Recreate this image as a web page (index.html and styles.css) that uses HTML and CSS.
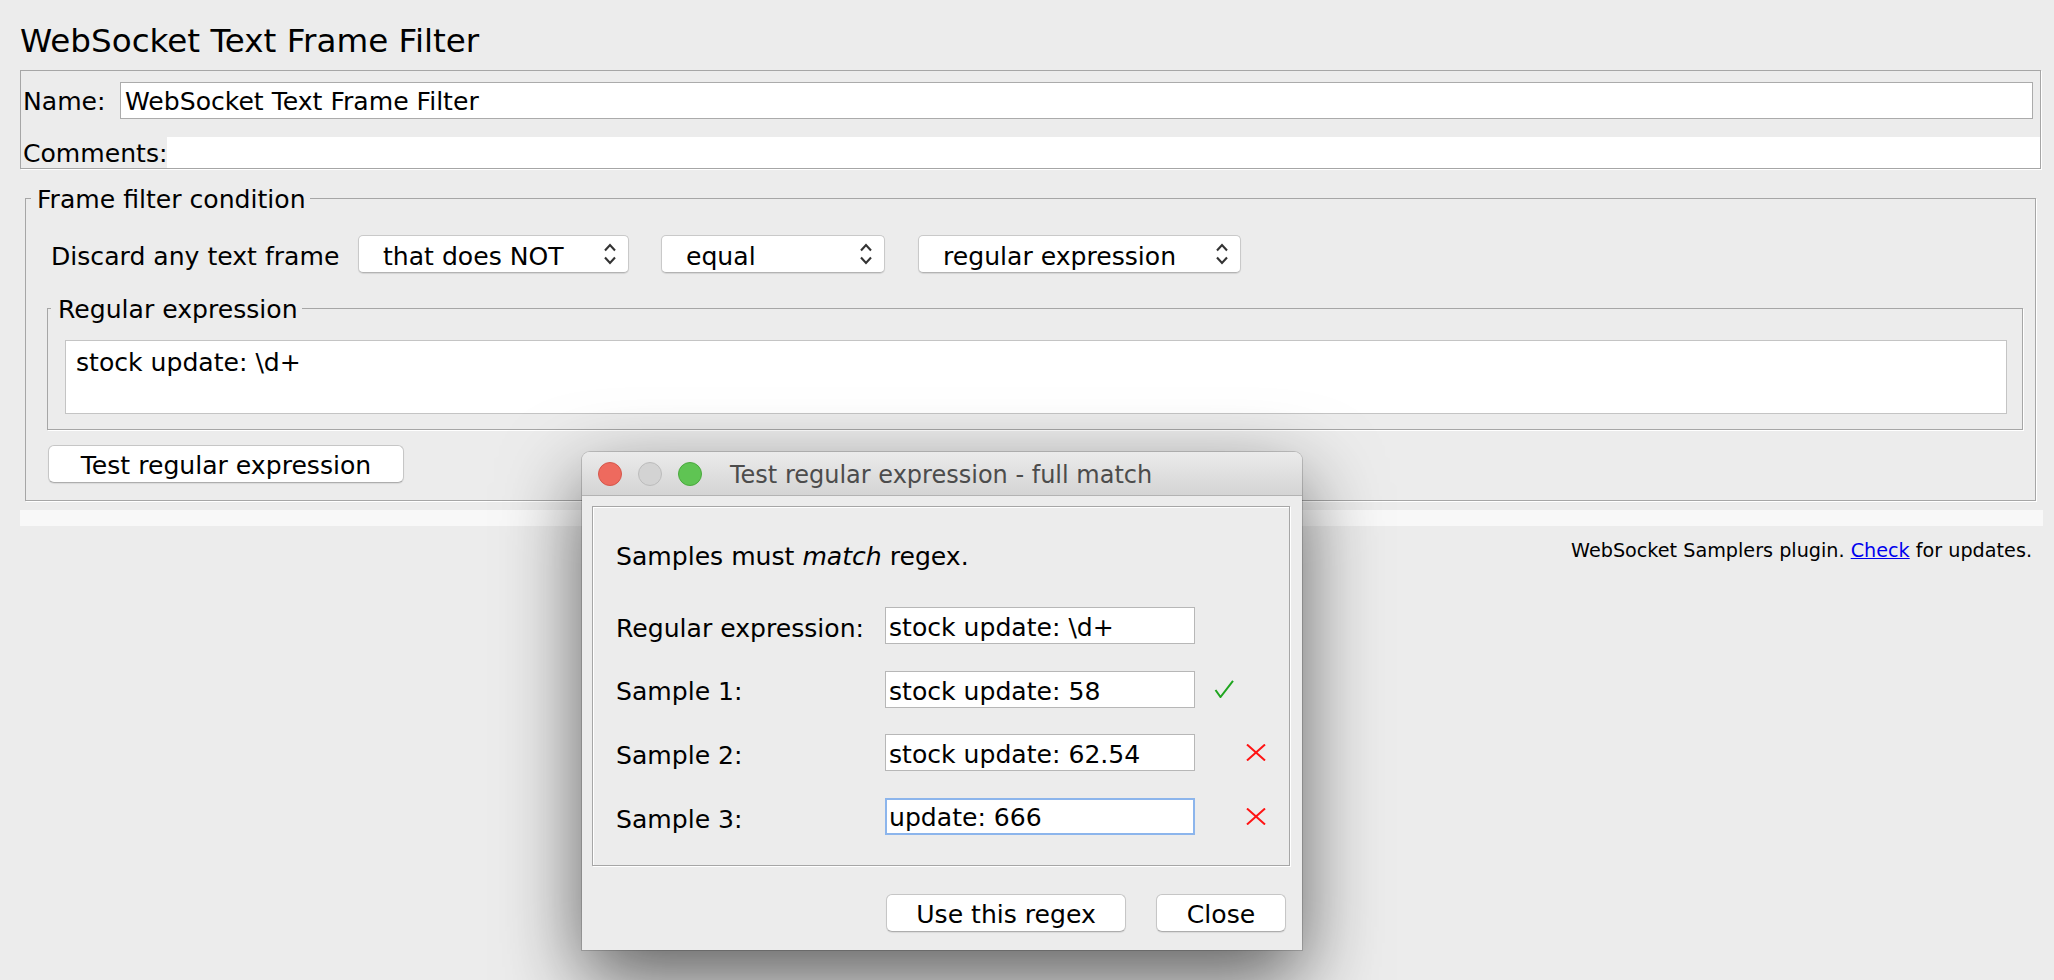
FILE: index.html
```html
<!DOCTYPE html>
<html>
<head>
<meta charset="utf-8">
<title>WebSocket Text Frame Filter</title>
<link rel="stylesheet" href="styles.css">
</head>
<body>
<div class="page">
  <h1 class="title">WebSocket Text Frame Filter</h1>

  <div class="name-panel">
    <div class="row name-row">
      <span class="lbl name-lbl">Name:</span>
      <div class="field name-field">WebSocket Text Frame Filter</div>
    </div>
    <div class="row comments-row">
      <span class="lbl comments-lbl">Comments:</span>
      <div class="comments-field"></div>
    </div>
  </div>

  <fieldset class="group outer">
    <legend class="outer-legend">Frame filter condition</legend>
    <div class="outer-body">
      <div class="cond-row">
        <span class="cond-lbl">Discard any text frame</span>
        <div class="combo c1"><span class="combo-text">that does NOT</span><svg class="arrows" width="12" height="24" viewBox="0 0 12 24"><path d="M1 8.5 L6 3 L11 8.5 M1 15.5 L6 21 L11 15.5" fill="none" stroke="#333" stroke-width="2.1"/></svg></div>
        <div class="combo c2"><span class="combo-text">equal</span><svg class="arrows" width="12" height="24" viewBox="0 0 12 24"><path d="M1 8.5 L6 3 L11 8.5 M1 15.5 L6 21 L11 15.5" fill="none" stroke="#333" stroke-width="2.1"/></svg></div>
        <div class="combo c3"><span class="combo-text">regular expression</span><svg class="arrows" width="12" height="24" viewBox="0 0 12 24"><path d="M1 8.5 L6 3 L11 8.5 M1 15.5 L6 21 L11 15.5" fill="none" stroke="#333" stroke-width="2.1"/></svg></div>
      </div>

      <fieldset class="group regex">
        <legend class="regex-legend">Regular expression</legend>
        <div class="regex-body">
          <div class="textarea">stock update: \d+</div>
        </div>
      </fieldset>

      <button class="btn test-btn">Test regular expression</button>
    </div>
  </fieldset>

  <div class="strip"></div>
  <div class="footer">WebSocket Samplers plugin. <a href="#" class="link">Check</a> for updates.</div>
</div>

<div class="dialog">
  <div class="titlebar">
    <span class="light red"></span>
    <span class="light gray"></span>
    <span class="light green"></span>
    <span class="dtitle">Test regular expression - full match</span>
  </div>
  <div class="inner">
    <div class="samples">Samples must <em>match</em> regex.</div>
    <div class="grid">
      <span class="dlbl">Regular expression:</span>
      <div class="dfield">stock update: \d+</div>
      <span class="mark"></span>

      <span class="dlbl">Sample 1:</span>
      <div class="dfield">stock update: 58</div>
      <span class="mark"><svg class="check" width="20" height="18" viewBox="0 0 20 18"><path d="M1.5 10 L6.5 17 L19 0.8" fill="none" stroke="#1fa51f" stroke-width="2"/></svg></span>

      <span class="dlbl">Sample 2:</span>
      <div class="dfield">stock update: 62.54</div>
      <span class="mark"><svg class="cross" width="20" height="17" viewBox="0 0 20 17"><path d="M1 0.5 L19 16.5 M19 0.5 L1 16.5" fill="none" stroke="#ff1414" stroke-width="2"/></svg></span>

      <span class="dlbl">Sample 3:</span>
      <div class="dfield focus">update: 666</div>
      <span class="mark"><svg class="cross" width="20" height="17" viewBox="0 0 20 17"><path d="M1 0.5 L19 16.5 M19 0.5 L1 16.5" fill="none" stroke="#ff1414" stroke-width="2"/></svg></span>
    </div>
  </div>
  <div class="dbuttons">
    <button class="btn use-btn">Use this regex</button>
    <button class="btn close-btn">Close</button>
  </div>
</div>
</body>
</html>
```

FILE: styles.css
```css
* { box-sizing: border-box; }

html, body {
  margin: 0;
  height: 980px;
  overflow: hidden;
}

body {
  position: relative;
  width: 2054px;
  background: #ececec;
  font-family: "DejaVu Sans", "Liberation Sans", sans-serif;
  font-size: 25.1px;
  color: #000;
}

.page {
  padding: 0 13px 0 20px;
}

.title {
  margin: 0;
  height: 70px;
  padding-top: 23px;
  font-size: 32.6px;
  line-height: 36px;
  font-weight: normal;
  white-space: nowrap;
}

/* Name / Comments panel */
.name-panel {
  height: 99px;
  border: 1px solid #a6a6a6;
  box-shadow: 1px 1px 0 #fff;
  padding-top: 11px;
}

.row {
  display: flex;
  align-items: center;
}

.name-row { height: 37px; }

.lbl {
  padding: 2px 0 0 2px;
  white-space: nowrap;
}

.name-lbl { width: 99px; flex: none; }

.field {
  background: #fff;
  border: 1px solid #ababab;
  white-space: nowrap;
}

.name-field {
  flex: 1;
  height: 37px;
  margin-right: 7px;
  padding: 1px 4px 0;
  line-height: 35px;
}

.comments-row {
  margin-top: 18px;
  height: 31px;
}

.comments-lbl { width: 146px; flex: none; }

.comments-field {
  flex: 1;
  height: 31px;
  background: #fff;
}

/* Titled (etched) groups */
.group {
  margin: 0;
  padding: 0;
  min-width: 0;
  border: 1px solid #a6a6a6;
  box-shadow: 1px 1px 0 #fff;
}

.group legend {
  line-height: 28px;
  padding-top: 4px;
  white-space: nowrap;
}

.outer {
  margin: 13px 5px 0 5px;
}

.outer-legend {
  margin-left: 5px;
  padding-left: 6px;
  padding-right: 4px;
}

.outer-body {
  padding: 21px 12px 17px 21px;
}

.cond-row {
  display: flex;
  align-items: center;
  height: 38px;
  margin-left: 4px;
}

.cond-lbl {
  width: 307px;
  flex: none;
  padding-top: 5px;
  white-space: nowrap;
}

.combo {
  flex: none;
  height: 38px;
  display: flex;
  align-items: center;
  justify-content: space-between;
  padding: 0 12px 0 24px;
  background: #fff;
  border: 1px solid #c9c9c9;
  border-bottom-color: #b3b3b3;
  border-radius: 5px;
  box-shadow: 0 1px 1px rgba(0, 0, 0, 0.1);
  white-space: nowrap;
}

.combo-text { padding-top: 5px; }

.c1 { width: 271px; }
.c2 { width: 224px; margin-left: 32px; }
.c3 { width: 323px; margin-left: 33px; }

.arrows { display: block; flex: none; }

.regex {
  margin-top: 19px;
}

.regex-legend {
  margin-left: 3px;
  padding-left: 7px;
  padding-right: 4px;
}

.regex-body {
  padding: 16px 15px 15px 17px;
}

.textarea {
  height: 74px;
  background: #fff;
  border: 1px solid #c4c4c4;
  padding: 7px 10px 0;
  line-height: 30px;
}

.btn {
  display: block;
  height: 38px;
  padding: 2px 0 0;
  font-family: inherit;
  font-size: inherit;
  color: #000;
  background: #fff;
  border: 1px solid #c6c6c6;
  border-bottom-color: #adadad;
  border-radius: 6px;
  box-shadow: 0 1px 1px rgba(0, 0, 0, 0.08);
  white-space: nowrap;
}

.test-btn {
  margin: 15px 0 0 1px;
  width: 356px;
}

.strip {
  margin: 9px -2px 0 0;
  height: 16px;
  background: #f8f8f8;
}

.footer {
  margin-top: 14px;
  padding-right: 9px;
  text-align: right;
  font-size: 19.2px;
  line-height: 22px;
  white-space: nowrap;
}

.link {
  color: #0000ee;
  text-decoration: underline;
}

/* Dialog window */
.dialog {
  position: absolute;
  left: 582px;
  top: 452px;
  width: 720px;
  height: 498px;
  background: #ececec;
  border-radius: 8px 8px 0 0;
  box-shadow: 0 30px 80px rgba(0, 0, 0, 0.6), 0 0 0 1px rgba(0, 0, 0, 0.16);
}

.titlebar {
  height: 44px;
  display: flex;
  align-items: center;
  padding-left: 16px;
  background: linear-gradient(#ebebeb, #d4d4d4);
  border-bottom: 1px solid #b3b3b3;
  border-radius: 8px 8px 0 0;
}

.light {
  width: 24px;
  height: 24px;
  border-radius: 50%;
  margin-right: 16px;
  flex: none;
}

.red { background: #ee6a5e; border: 1px solid #d5574b; }
.gray { background: #d3d3d3; border: 1px solid #bcbcbc; }
.green { background: #5fc453; border: 1px solid #4aa93d; margin-right: 28px; }

.dtitle {
  font-size: 24px;
  color: #4c4c4c;
  padding-top: 2px;
  white-space: nowrap;
}

.inner {
  margin: 10px 12px 0 10px;
  height: 360px;
  border: 1px solid #a6a6a6;
  box-shadow: 1px 1px 0 #fff, inset 1px 1px 0 #fff;
  padding: 35px 0 0 23px;
}

.samples {
  height: 30px;
  line-height: 30px;
  white-space: nowrap;
}

.samples em {
  font-style: italic;
}

.grid {
  margin-top: 35px;
  display: grid;
  grid-template-columns: 269px 310px auto;
  grid-auto-rows: 37px;
  row-gap: 26.7px;
  align-items: center;
}

.dlbl {
  padding-top: 5px;
  white-space: nowrap;
}

.dfield {
  height: 37px;
  background: #fff;
  border: 1px solid #b7b7b7;
  padding: 2px 3px 0;
  line-height: 35px;
  white-space: nowrap;
}

.dfield.focus {
  border: 2px solid #8cb5ec;
  padding: 1px 2px 0;
  line-height: 33px;
}

.mark {
  display: flex;
  align-items: center;
}

.check { display: block; margin-left: 19px; }
.cross { display: block; margin-left: 51px; }

.dbuttons {
  display: flex;
  justify-content: flex-end;
  gap: 30px;
  margin-top: 28px;
  padding-right: 16px;
}

.use-btn { width: 240px; }
.close-btn { width: 130px; }
```
